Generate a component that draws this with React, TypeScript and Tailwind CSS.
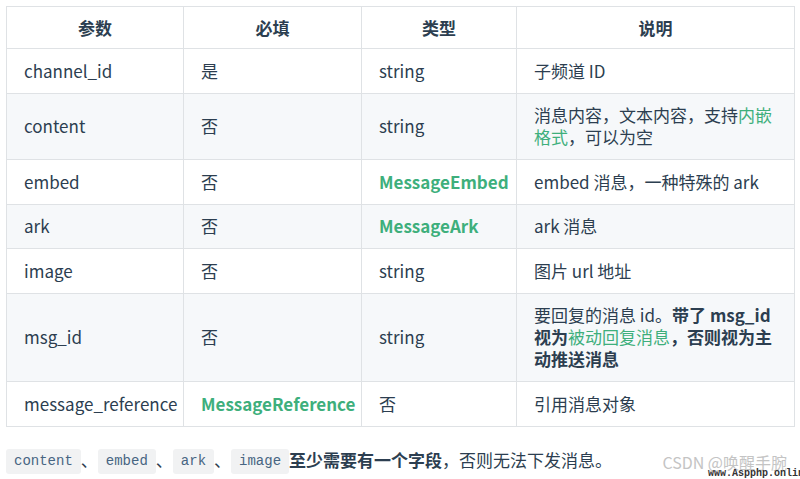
import React from "react";

type Row = {
  name: string;
  required: React.ReactNode;
  type: React.ReactNode;
  desc: React.ReactNode;
};

const Link: React.FC<{ children: React.ReactNode }> = ({ children }) => (
  <span className="text-[#3eaf7c]">{children}</span>
);

const TypeLink: React.FC<{ children: React.ReactNode }> = ({ children }) => (
  <span className="text-[#3eaf7c] font-semibold">{children}</span>
);

const Code: React.FC<{ children: React.ReactNode }> = ({ children }) => (
  <code className="inline-block rounded-[3px] bg-[#f1f2f3] px-2 py-[3px] align-middle font-['Liberation_Mono',monospace] text-[14px] leading-[19px] text-[#476582]">
    {children}
  </code>
);

const rows: Array<Row> = [
  { name: "channel_id", required: "是", type: "string", desc: "子频道 ID" },
  {
    name: "content",
    required: "否",
    type: "string",
    desc: (
      <>
        消息内容，文本内容，支持<Link>内嵌格式</Link>，可以为空
      </>
    ),
  },
  {
    name: "embed",
    required: "否",
    type: <TypeLink>MessageEmbed</TypeLink>,
    desc: "embed 消息，一种特殊的 ark",
  },
  {
    name: "ark",
    required: "否",
    type: <TypeLink>MessageArk</TypeLink>,
    desc: "ark 消息",
  },
  { name: "image", required: "否", type: "string", desc: "图片 url 地址" },
  {
    name: "msg_id",
    required: "否",
    type: "string",
    desc: (
      <>
        要回复的消息 id。<b className="font-bold">带了 msg_id 视为</b>
        <Link>被动回复消息</Link>
        <b className="font-bold">，否则视为主动推送消息</b>
      </>
    ),
  },
  {
    name: "message_reference",
    required: <TypeLink>MessageReference</TypeLink>,
    type: "否",
    desc: "引用消息对象",
  },
];

const headers = ["参数", "必填", "类型", "说明"];

export default function App() {
  return (
    <div className="relative h-[479px] w-[800px] overflow-hidden bg-white p-[6px] font-['Noto_Sans_CJK_SC','Liberation_Sans',sans-serif] text-[17px] text-[#2c3e50]">
      <table className="w-[788px] table-fixed border-collapse">
        <colgroup>
          <col className="w-[177px]" />
          <col className="w-[178px]" />
          <col className="w-[155px]" />
          <col className="w-[278px]" />
        </colgroup>
        <thead>
          <tr className="bg-white">
            {headers.map((h) => (
              <th
                key={h}
                className="border border-[#dfe2e5] px-[17px] py-[9.5px] text-center font-bold leading-[22px]"
              >
                {h}
              </th>
            ))}
          </tr>
        </thead>
        <tbody>
          {rows.map((row, i) => (
            <tr
              key={row.name}
              className={i % 2 === 1 ? "bg-[#f6f8fa]" : "bg-white"}
            >
              <td className="border border-[#dfe2e5] px-[17px] py-[10.75px] leading-[22px]">
                {row.name}
              </td>
              <td className="border border-[#dfe2e5] px-[17px] py-[10.75px] leading-[22px]">
                {row.required}
              </td>
              <td className="border border-[#dfe2e5] px-[17px] py-[10.75px] leading-[22px]">
                {row.type}
              </td>
              <td className="border border-[#dfe2e5] px-[17px] py-[10.75px] leading-[22px]">
                {row.desc}
              </td>
            </tr>
          ))}
        </tbody>
      </table>

      <p className="mt-[22px] leading-[22px]">
        <Code>content</Code>、<Code>embed</Code>、<Code>ark</Code>、
        <Code>image</Code>
        <b className="font-bold">至少需要有一个字段</b>，否则无法下发消息。
      </p>

      {/* watermark */}
      <span className="absolute right-[13px] top-[452px] text-[16px] leading-[20px] text-[#c4c4c4]">
        CSDN @唤醒手腕
      </span>
      <span className="absolute left-[708px] top-[469px] whitespace-nowrap font-['Liberation_Mono',monospace] text-[10px] font-bold leading-[10px] text-[#333]">
        www.Aspphp.online
      </span>
    </div>
  );
}
